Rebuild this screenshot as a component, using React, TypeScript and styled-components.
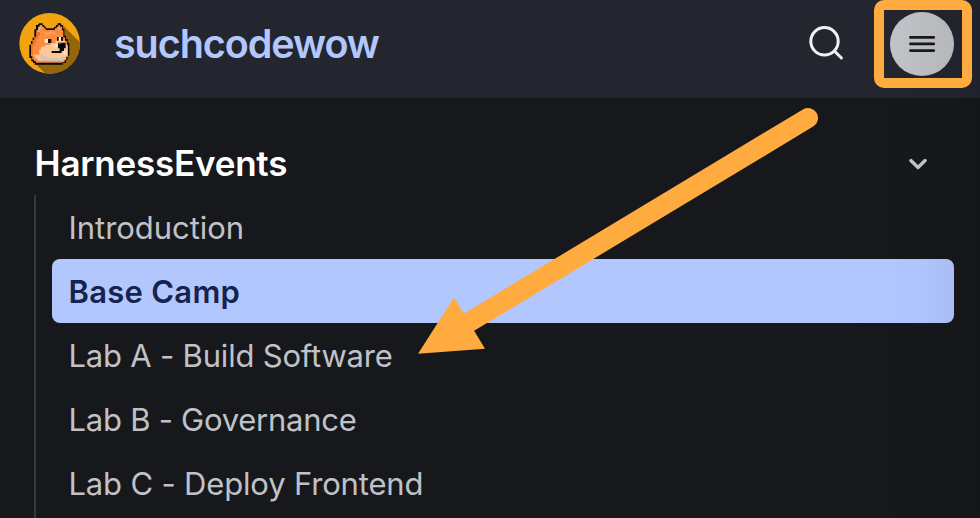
import React from "react";
import styled, { createGlobalStyle } from "styled-components";

const GlobalStyle = createGlobalStyle`
  * { box-sizing: border-box; }
  body { margin: 0; background: #17181c; overflow: hidden; font-family: Inter, "Liberation Sans", sans-serif; }
`;

const Page = styled.div`
  position: relative;
  width: 980px;
  height: 518px;
  overflow: hidden;
  background: linear-gradient(90deg, #17181c 90%, #151619);
`;

const Header = styled.header`
  display: flex;
  align-items: center;
  height: 98px;
  padding: 0 8px 10px 18px;
  background: linear-gradient(90deg, #23262f 90%, #20232b);
`;

const SiteTitle = styled.a`
  flex: 1;
  margin-left: 32px;
  font-size: 39.5px;
  line-height: 48px;
  font-weight: 600;
  letter-spacing: -1.08px;
  color: #b3c7ff;
`;

const Highlight = styled.div`
  display: flex;
  align-items: center;
  justify-content: center;
  width: 98px;
  height: 88px;
  margin-left: 27px;
  border: 10px solid #ffab40;
  border-radius: 10px;
`;

const MenuButton = styled.button`
  display: flex;
  align-items: center;
  justify-content: center;
  width: 64px;
  height: 64px;
  margin-left: -2px;
  padding: 0;
  border: 0;
  border-radius: 50%;
  background: linear-gradient(90deg, #c2c3c8, #b6b7ba);
`;

const Sidebar = styled.nav`
  padding: 33px 26px 0 34px;
`;

const Group = styled.div`
  display: flex;
  align-items: center;
  justify-content: space-between;
  height: 64px;
  padding-right: 26px;
`;

const GroupTitle = styled.h2`
  margin: 0;
  padding-left: 0.6px;
  font-size: 35px;
  line-height: 50px;
  font-weight: 600;
  letter-spacing: -0.22px;
  color: #fff;
`;

const List = styled.ul`
  display: flex;
  flex-direction: column;
  margin: 0;
  padding: 0 0 0 16px;
  height: 340px;
  list-style: none;
  border-left: 2px solid #353841;
`;

const Item = styled.li<{ $current?: boolean; $spacing: number }>`
  flex: none;
  height: 64px;
  padding-left: 16.5px;
  border-radius: 8px;
  font-size: 31px;
  line-height: 66px;
  letter-spacing: ${(p) => p.$spacing}px;
  font-weight: ${(p) => (p.$current ? 600 : 400)};
  color: ${(p) => (p.$current ? "#17234f" : "#c0c2c7")};
  background: ${(p) =>
    p.$current ? "linear-gradient(90deg, #b3c7ff 87%, #aec6ff 96%, #abbcf3)" : "none"};
`;

const Arrow = styled.svg`
  position: absolute;
  inset: 0;
  pointer-events: none;
`;

const Logo = () => (
  <svg width="64" height="64" viewBox="24 24 192 192">
    <defs>
      <clipPath id="coin"><circle cx="119" cy="118" r="91" /></clipPath>
    </defs>
    <circle cx="119" cy="118" r="91" fill="#f2a30f" />
    <path d="M154 59L230 135V230H127L75 178Z" fill="#956509" clipPath="url(#coin)" />
    <path d="M88 58h10v5h5v5h5v5h24v-5h6v-5h5v-5h10v5h5v11h5v21h5v10h5v12h5v38h-5v12h-5v10h-10v5H74v-5h-5v-5h-5v-10h-6v-40h5v-11h5v-10h5V76h5V63h5z" fill="#050505" />
    <path d="M89 63h8v5h5v5h5v5h27v-5h6v-5h5v-5h5v5h6v11h4v21h5v10h5v12h4v36h-5v10h-5v7h-8v1H78v-4h-6v-5h-5v-10h-4v-34h5v-12h5v-10h6V78h5V68h5z" fill="#fb8c3c" />
    <path d="M89 65h6v10h-5v10h-5V70h4zM146 65h4v11h-7v-5h3z" fill="#d9b08f" />
    <path d="M84 84h6v10h-6v11h-5v12h-6v10h-5v22h-5v-29h5v-12h5v-10h6V84z" fill="#ef6f2b" />
    <path d="M104 84h32v5h-16v5h-16z" fill="#ff9c51" />
    <path d="M137 110h28v6h5v12h2v29h-5v9h-6v4H84v-4h-6v-6h-5v-8h15v-15h5v-9h11v-5h16v-5h17z" fill="#fdc899" />
    <path d="M130 120h14v10h-14zM160 140h10v12h-10z" fill="#ffdcb8" />
    <path d="M92 152h10v6h10v5h42v-5h9v9h-5v4H98v-6h-6z" fill="#d3c3b8" />
    <path d="M104 105h10v11h-10zM146 99h7v11h-7z" fill="#fff5e8" />
    <path d="M114 105h10v12h-10zM141 99h5v11h-5zM153 99h6v11h-6z" fill="#080808" />
    <path d="M144 116h23v17h-5v8h-7v6h-30v-6h24v-8h-5z" fill="#080808" />
    <path d="M146 116h8v4h-8z" fill="#656565" />
  </svg>
);

const SearchIcon = () => (
  <svg width="40" height="40" viewBox="0 0 40 40" fill="none" stroke="#f1f1f5" strokeWidth="3" strokeLinecap="round">
    <circle cx="17.5" cy="17.3" r="13.7" />
    <path d="M27.6 27.2L34.4 34" />
  </svg>
);

const items = [
  { label: "Introduction", spacing: -0.04 },
  { label: "Base Camp", spacing: 0.27, current: true },
  { label: "Lab A - Build Software", spacing: -0.2 },
  { label: "Lab B - Governance", spacing: -0.25 },
  { label: "Lab C - Deploy Frontend", spacing: -0.17 },
];

export default function App() {
  return (
    <Page>
      <GlobalStyle />
      <Header>
        <Logo />
        <SiteTitle>suchcodewow</SiteTitle>
        <SearchIcon />
        <Highlight>
          <MenuButton aria-label="Menu">
            <svg width="28" height="18" viewBox="0 0 28 18" stroke="#17181c" strokeWidth="2.6" strokeLinecap="round">
              <path d="M2.4 2.4h23.4M2.4 8.9h23.4M2.4 15.6h23.4" />
            </svg>
          </MenuButton>
        </Highlight>
      </Header>
      <Sidebar>
        <Group>
          <GroupTitle>HarnessEvents</GroupTitle>
          <svg width="20" height="14" viewBox="0 0 20 14" fill="none" stroke="#c0c2c7" strokeWidth="3.4" strokeLinecap="round" strokeLinejoin="round">
            <path d="M2.9 4.6L10 11.4L17.1 4.6" />
          </svg>
        </Group>
        <List>
          {items.map((i) => (
            <Item key={i.label} $current={i.current} $spacing={i.spacing}>{i.label}</Item>
          ))}
        </List>
      </Sidebar>
      <Arrow width="980" height="518" viewBox="0 0 980 518">
        <path d="M808 118L466 324" stroke="#ffab40" strokeWidth="20" strokeLinecap="round" />
        <path d="M418 353.7L454 297.5L485 348.7Z" fill="#ffab40" />
      </Arrow>
    </Page>
  );
}
